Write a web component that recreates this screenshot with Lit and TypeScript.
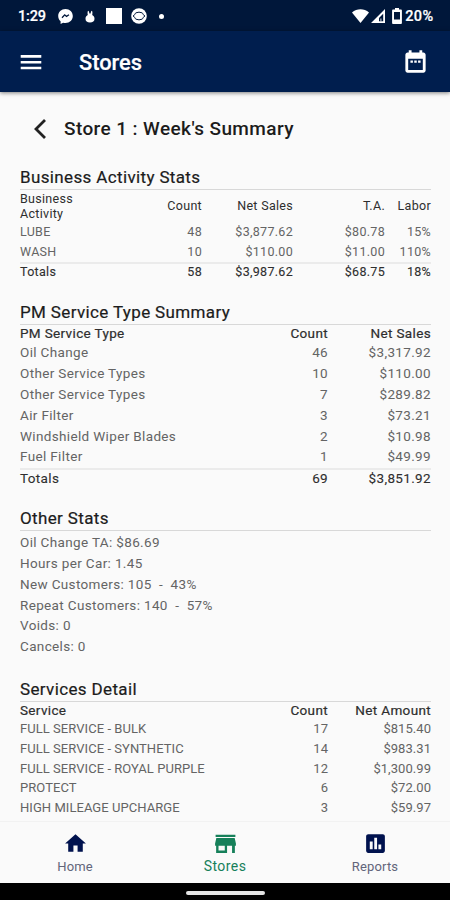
import { LitElement, html, css, svg } from "lit";
import { customElement, property } from "lit/decorators.js";
import { classMap } from "lit/directives/class-map.js";

type Row = string[];

@customElement("status-bar")
class StatusBar extends LitElement {
  static styles = css`
    :host { display: flex; height: 31px; background: #00173a; color: #fff; align-items: center; padding: 0 17px 0 18px; box-sizing: border-box; justify-content: space-between; }
    .group { display: flex; align-items: center; padding-top: 1px; }
    .time { font-size: 14.500px; font-weight: 500; width: 40px; letter-spacing: -0.2px; white-space: nowrap; -webkit-text-stroke: 0.2px currentColor; }
    .pct { font-size: 14.500px; font-weight: 500; letter-spacing: 0.4px; margin-right: -0.5px; -webkit-text-stroke: 0.2px currentColor; }
    svg { display: block; fill: #fff; }
    .chat { margin-right: 12px; }
    .bunny { margin-right: 11px; }
    .square { width: 16px; height: 16px; background: #fff; margin-right: 9px; }
    .dot { width: 5px; height: 5px; border-radius: 50%; background: #fff; margin-left: 12px; }
    .wifi { margin-right: 2px; }
    .cell { margin-right: 7px; }
    .batt { margin-right: 3px; }
  `;
  render() {
    return html`
      <div class="group">
        <span class="time">1:29</span>
        <svg class="chat" width="15" height="15" viewBox="0 0 15 15"><path d="M7.500 0C3.300 0 .2 3 .2 7c0 2.200.9 4 2.400 5.200V15l2.500-1.200c.8.200 1.600.3 2.400.3 4.200 0 7.300-3 7.300-7S11.700 0 7.500 0z"/><path d="M4 8.700l2.700-2.900 1.800 1.600 2.500-1.700" fill="none" stroke="#00173a" stroke-width="1.300"/></svg>
        <svg class="bunny" width="10" height="13" viewBox="0 0 10 13"><path d="M3 .8c.8 0 1.200 1.200 1.400 2.800h1.200C5.800 2 6.200.8 7 .8c.6 1.300.5 2.800.2 4.200C8.700 5.800 9.500 7 9.500 8.700c0 2.500-1.700 3.800-4.500 3.800S.5 11.200.5 8.700C.5 7 1.300 5.800 2.800 5 2.500 3.600 2.400 2.100 3 .8z"/></svg>
        <div class="square"></div>
        <svg width="16" height="16" viewBox="0 0 16 16"><circle cx="8" cy="8" r="7.800"/><g fill="none" stroke="#00173a" stroke-width="1"><path d="M5 4.800C3.900 5 4 7.500 2 8c2 .5 1.900 3 3 3.200M11 4.800c1.100.2 1 2.700 3 3.200-2 .5-1.900 3-3 3.200M5 4.800q3-1.300 6 0M5 11.200q3 1.300 6 0"/></g></svg>
        <div class="dot"></div>
      </div>
      <div class="group">
        <svg class="wifi" width="17" height="14" viewBox="0 0 17 14"><path d="M0 3.400C5-.9 12-.9 17 3.400L8.500 14z"/></svg>
        <svg class="cell" width="14" height="14" viewBox="0 0 14 14"><path fill-rule="evenodd" d="M14 0v14H0zM12.200 4.800L8 9v3.200h4.200z"/><path d="M9 9.500h1.700v2.800H9z" opacity=".5"/></svg>
        <svg class="batt" width="10" height="16" viewBox="0 0 10 16"><path fill-rule="evenodd" d="M3 0h4v1.500h2q.9 0 .9.900V15q0 .9-.9.900H1q-.9 0-.9-.9V2.400q0-.9.900-.9h2zM2 4v7.400h6V4z"/></svg>
        <span class="pct">20%</span>
      </div>`;
  }
}

@customElement("data-table")
class DataTable extends LitElement {
  @property({ attribute: false }) head: Row = [];
  @property({ attribute: false }) rows: Row[] = [];
  @property({ attribute: false }) totals: Row | null = null;
  @property() kind = "pm";
  static styles = css`
    :host { display: block; font-size: 13.500px; color: #646464; letter-spacing: 0.35px; }
    .row { display: grid; align-items: center; white-space: nowrap; text-align: right; }
    .row > :first-child { text-align: left; }
    .activity { grid-template-columns: 80px 102px 91px 92px 46px; }
    .pm, .services { grid-template-columns: 218px 90px 103px; }
    .head { color: #2e2e2e; }
    .row.head > :first-child { white-space: pre-line; }
    .activity { height: 19.800px; font-size: 12.500px; letter-spacing: 0.3px; }
    .activity.head { height: 32px; line-height: 15.500px; }
    .activity:not(.head):not(.totals) > span { margin-top: -1px; }
    .pm { height: 20.800px; line-height: 18px; }
    .pm.head { height: 18px; }
    .pm > span, .services > span { margin-top: -2px; }
    .services { height: 19.700px; font-size: 13px; letter-spacing: 0.05px; }
    .services.head { height: 18px; font-size: 13.500px; letter-spacing: 0.35px; }
    .pm.head, .services.head { -webkit-text-stroke: 0.2px currentColor; }
    .totals { border-top: 2px solid #ebebeb; box-sizing: border-box; color: #2e2e2e; height: 18px; -webkit-text-stroke: 0.1px currentColor; }
    .pm.totals { height: 20px; }
  `;
  line(cells: Row, extra: Record<string, boolean> = {}) {
    return html`<div class=${classMap({ row: true, [this.kind]: true, ...extra })}>${cells.map((c) => html`<span>${c}</span>`)}</div>`;
  }
  render() {
    return html`${this.line(this.head, { head: true })}${this.rows.map((r) => this.line(r))}${this.totals ? this.line(this.totals, { totals: true }) : ""}`;
  }
}

const homeIcon = svg`<path d="M10 20v-6h4v6h5v-8h3L12 3 2 12h3v8z"/>`;
const storeIcon = svg`<path d="M21.500 3.500h-19v2.200h19zm.5 10.700V12l-1.200-5.300H3.200L2 12v2.200h1V21h10.500v-6.800h4.800V21h2.700v-6.800zm-10.700 4.600H5.300v-4.600h6z"/>`;
const reportsIcon = svg`<path d="M19 3H5c-1.100 0-2 .9-2 2v14c0 1.100.9 2 2 2h14c1.100 0 2-.9 2-2V5c0-1.100-.9-2-2-2zM9.300 17.500H6.500V10h2.800zm4.200 0h-2.700V6.500h2.700zm4 0h-2.700V13h2.700z"/>`;

@customElement("app-root")
class AppRoot extends LitElement {
  static styles = css`
    :host { display: flex; flex-direction: column; height: 900px; overflow: hidden; background: #fafafa; font-family: Roboto, sans-serif; color: #1c1c1c; }
    .appbar { height: 61px; flex: none; background: #001e4e; color: #fff; display: flex; align-items: center; padding: 0 21px 0 18px; box-shadow: 0 1px 4px rgba(0, 0, 0, 0.5); z-index: 1; }
    .appbar svg { fill: #fff; }
    .title { font-size: 21.800px; font-weight: 500; margin-left: 35px; flex: 1; padding-top: 1px; -webkit-text-stroke: 0.2px currentColor; }
    .main { flex: 1; min-height: 0; overflow: hidden; padding: 0 19px 0 20px; }
    .crumb { display: flex; align-items: center; height: 73px; padding-left: 12px; }
    .crumb svg { fill: none; stroke: #222; stroke-width: 2.800; }
    .crumb h1 { font-size: 19px; font-weight: 500; margin: 0 0 0 16px; letter-spacing: 0.4px; }
    h2 { margin: 0; font-size: 17px; font-weight: 400; letter-spacing: 0.36px; height: 24px; line-height: 24px; border-bottom: 1px solid #d8d8d8; -webkit-text-stroke: 0.2px currentColor; }
    .s1 { height: 135px; }
    .s2 { height: 206px; }
    .s3 { height: 171px; }
    .stat { height: 20.850px; line-height: 23px; font-size: 13.500px; letter-spacing: 0.35px; color: #646464; white-space: pre; }
    nav { flex: none; height: 62px; border-top: 1px solid #f2f2f2; box-sizing: border-box; display: grid; grid-template-columns: repeat(3, 1fr); background: #fafafa; }
    .tab { display: flex; flex-direction: column; align-items: center; padding-top: 9px; font-size: 13px; letter-spacing: 0.15px; color: #62657a; gap: 3px; }
    .tab svg { fill: #00124e; flex: none; }
    .tab.on { color: #16805a; font-size: 14px; letter-spacing: 0.45px; gap: 2px; }
    .tab.on svg { fill: #16805a; }
    .system { flex: none; height: 17px; background: #000; display: flex; justify-content: center; align-items: center; }
    .pill { width: 79px; height: 4px; border-radius: 2px; background: #e4e4e4; margin-top: 2px; }
  `;
  render() {
    const stats = ["Oil Change TA: $86.69", "Hours per Car: 1.45", "New Customers: 105  -  43%", "Repeat Customers: 140  -  57%", "Voids: 0", "Cancels: 0"];
    const tabs = [
      { label: "Home", icon: homeIcon, on: false },
      { label: "Stores", icon: storeIcon, on: true },
      { label: "Reports", icon: reportsIcon, on: false },
    ];
    return html`
      <status-bar></status-bar>
      <header class="appbar">
        <svg width="26" height="26" viewBox="0 0 24 24"><path d="M2.500 18.800h19v-2.400h-19zm0-5.400h19V11h-19zm0-7.800V8h19V5.600z"/></svg>
        <span class="title">Stores</span>
        <svg width="27" height="27" viewBox="0 0 24 24"><path d="M9.700 11H7.500v2h2.200zm3.400 0h-2.200v2h2.200zm3.400 0h-2.200v2h2.200zM19 4h-1V2h-2.500v2h-7V2H6v2H5c-1.100 0-2 .9-2 2v14c0 1.100.9 2 2 2h14c1.100 0 2-.9 2-2V6c0-1.100-.9-2-2-2zm-.5 15.500h-13v-10h13z"/></svg>
      </header>
      <main class="main">
        <div class="crumb">
          <svg width="16" height="22" viewBox="0 0 16 22"><path d="M13 2L4 11l9 9"/></svg>
          <h1>Store 1 : Week's Summary</h1>
        </div>
        <section class="s1">
          <h2>Business Activity Stats</h2>
          <data-table kind="activity" .head=${["Business\nActivity", "Count", "Net Sales", "T.A.", "Labor"]}
            .rows=${[["LUBE", "48", "$3,877.62", "$80.78", "15%"], ["WASH", "10", "$110.00", "$11.00", "110%"]]}
            .totals=${["Totals", "58", "$3,987.62", "$68.75", "18%"]}></data-table>
        </section>
        <section class="s2">
          <h2>PM Service Type Summary</h2>
          <data-table kind="pm" .head=${["PM Service Type", "Count", "Net Sales"]}
            .rows=${[["Oil Change", "46", "$3,317.92"], ["Other Service Types", "10", "$110.00"], ["Other Service Types", "7", "$289.82"], ["Air Filter", "3", "$73.21"], ["Windshield Wiper Blades", "2", "$10.98"], ["Fuel Filter", "1", "$49.99"]]}
            .totals=${["Totals", "69", "$3,851.92"]}></data-table>
        </section>
        <section class="s3">
          <h2>Other Stats</h2>
          ${stats.map((s) => html`<div class="stat">${s}</div>`)}
        </section>
        <section>
          <h2>Services Detail</h2>
          <data-table kind="services" .head=${["Service", "Count", "Net Amount"]}
            .rows=${[["FULL SERVICE - BULK", "17", "$815.40"], ["FULL SERVICE - SYNTHETIC", "14", "$983.31"], ["FULL SERVICE - ROYAL PURPLE", "12", "$1,300.99"], ["PROTECT", "6", "$72.00"], ["HIGH MILEAGE UPCHARGE", "3", "$59.97"]]}></data-table>
        </section>
      </main>
      <nav>
        ${tabs.map((t) => html`<div class=${classMap({ tab: true, on: t.on })}><svg width="25" height="25" viewBox="0 0 24 24">${t.icon}</svg><span>${t.label}</span></div>`)}
      </nav>
      <div class="system"><div class="pill"></div></div>`;
  }
}
